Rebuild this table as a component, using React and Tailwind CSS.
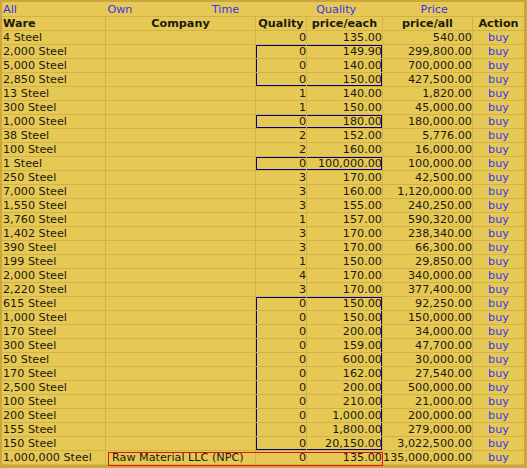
import React from 'react';

const rows = [
  ['4 Steel', 0, '135.00', '540.00'],
  ['2,000 Steel', 0, '149.90', '299,800.00', 'top'],
  ['5,000 Steel', 0, '140.00', '700,000.00', 'mid'],
  ['2,850 Steel', 0, '150.00', '427,500.00', 'bot'],
  ['13 Steel', 1, '140.00', '1,820.00'],
  ['300 Steel', 1, '150.00', '45,000.00'],
  ['1,000 Steel', 0, '180.00', '180,000.00', 'one'],
  ['38 Steel', 2, '152.00', '5,776.00'],
  ['100 Steel', 2, '160.00', '16,000.00'],
  ['1 Steel', 0, '100,000.00', '100,000.00', 'one'],
  ['250 Steel', 3, '170.00', '42,500.00'],
  ['7,000 Steel', 3, '160.00', '1,120,000.00'],
  ['1,550 Steel', 3, '155.00', '240,250.00'],
  ['3,760 Steel', 1, '157.00', '590,320.00'],
  ['1,402 Steel', 3, '170.00', '238,340.00'],
  ['390 Steel', 3, '170.00', '66,300.00'],
  ['199 Steel', 1, '150.00', '29,850.00'],
  ['2,000 Steel', 4, '170.00', '340,000.00'],
  ['2,220 Steel', 3, '170.00', '377,400.00'],
  ['615 Steel', 0, '150.00', '92,250.00', 'top'],
  ['1,000 Steel', 0, '150.00', '150,000.00', 'mid'],
  ['170 Steel', 0, '200.00', '34,000.00', 'mid'],
  ['300 Steel', 0, '159.00', '47,700.00', 'mid'],
  ['50 Steel', 0, '600.00', '30,000.00', 'mid'],
  ['170 Steel', 0, '162.00', '27,540.00', 'mid'],
  ['2,500 Steel', 0, '200.00', '500,000.00', 'mid'],
  ['100 Steel', 0, '210.00', '21,000.00', 'mid'],
  ['200 Steel', 0, '1,000.00', '200,000.00', 'mid'],
  ['155 Steel', 0, '1,800.00', '279,000.00', 'mid'],
  ['150 Steel', 0, '20,150.00', '3,022,500.00', 'bot'],
];

// blue outline around quality + price/each, drawn as inset shadows per cell
const qualityBox = {
  top: 'shadow-[inset_1px_1px_0_#000080]',
  mid: 'shadow-[inset_1px_0_0_#000080]',
  bot: 'shadow-[inset_1px_-1px_0_#000080]',
  one: 'shadow-[inset_1px_1px_0_#000080,inset_0_-1px_0_#000080]',
};
const priceBox = {
  top: 'shadow-[inset_-1px_1px_0_#000080]',
  mid: 'shadow-[inset_-1px_0_0_#000080]',
  bot: 'shadow-[inset_-1px_-1px_0_#000080]',
  one: 'shadow-[inset_-1px_1px_0_#000080,inset_0_-1px_0_#000080]',
};

const cell = 'h-full border-r border-[#d4b24a] whitespace-nowrap overflow-hidden';

export default function App() {
  return (
    <div
      className="w-[527px] h-[468px] bg-[#e6c855] border-t-2 border-l-2 border-r-[3px] border-b-[3px] border-[#cba63c] text-[#1c1a10] text-[11.2px] leading-[13px]"
      style={{ fontFamily: '"DejaVu Sans", Verdana, sans-serif' }}
    >
      <div className="grid grid-cols-5 h-[15px] border-b border-[#d4b24a] text-[#3535ee] pt-px">
        {['All', 'Own', 'Time', 'Quality', 'Price'].map(l => (
          <div key={l} className="pl-px">{l}</div>
        ))}
      </div>

      <div className="flex h-[14px] border-b border-[#d4b24a] font-bold">
        <div className={`${cell} w-[104px] pl-px`}>Ware</div>
        <div className={`${cell} w-[150px] text-center`}>Company</div>
        <div className={`${cell} w-[51px] text-center`}>Quality</div>
        <div className={`${cell} w-[76px] text-center`}>price/each</div>
        <div className={`${cell} w-[90px] text-center`}>price/all</div>
        <div className="flex-1 text-center">Action</div>
      </div>

      {rows.map((r, i) => (
        <div key={i} className="flex h-[14px] border-b border-[#d4b24a]">
          <div className={`${cell} w-[104px] pl-px`}>{r[0]}</div>
          <div className={`${cell} w-[150px]`}></div>
          <div className={`${cell} w-[51px] text-right ${r[4] ? qualityBox[r[4]] : ''}`}>{r[1]}</div>
          <div className={`${cell} w-[76px] text-right ${r[4] ? priceBox[r[4]] : ''}`}>{r[2]}</div>
          <div className={`${cell} w-[90px] text-right`}>{r[3]}</div>
          <div className="flex-1 text-center text-[#3535ee]">buy</div>
        </div>
      ))}

      <div className="relative flex h-[14px] border-b border-[#d4b24a]">
        <div className={`${cell} w-[104px] pl-px`}>1,000,000 Steel</div>
        <div className={`${cell} w-[150px] pl-[6px]`}>Raw Material LLC (NPC)</div>
        <div className={`${cell} w-[51px] text-right`}>0</div>
        <div className={`${cell} w-[76px] text-right`}>135.00</div>
        <div className={`${cell} w-[90px] text-right`}>135,000,000.00</div>
        <div className="flex-1 text-center text-[#3535ee]">buy</div>
        <div className="absolute left-[106px] top-px w-[275px] h-[14px] border border-[#e81010]"></div>
      </div>
    </div>
  );
}
